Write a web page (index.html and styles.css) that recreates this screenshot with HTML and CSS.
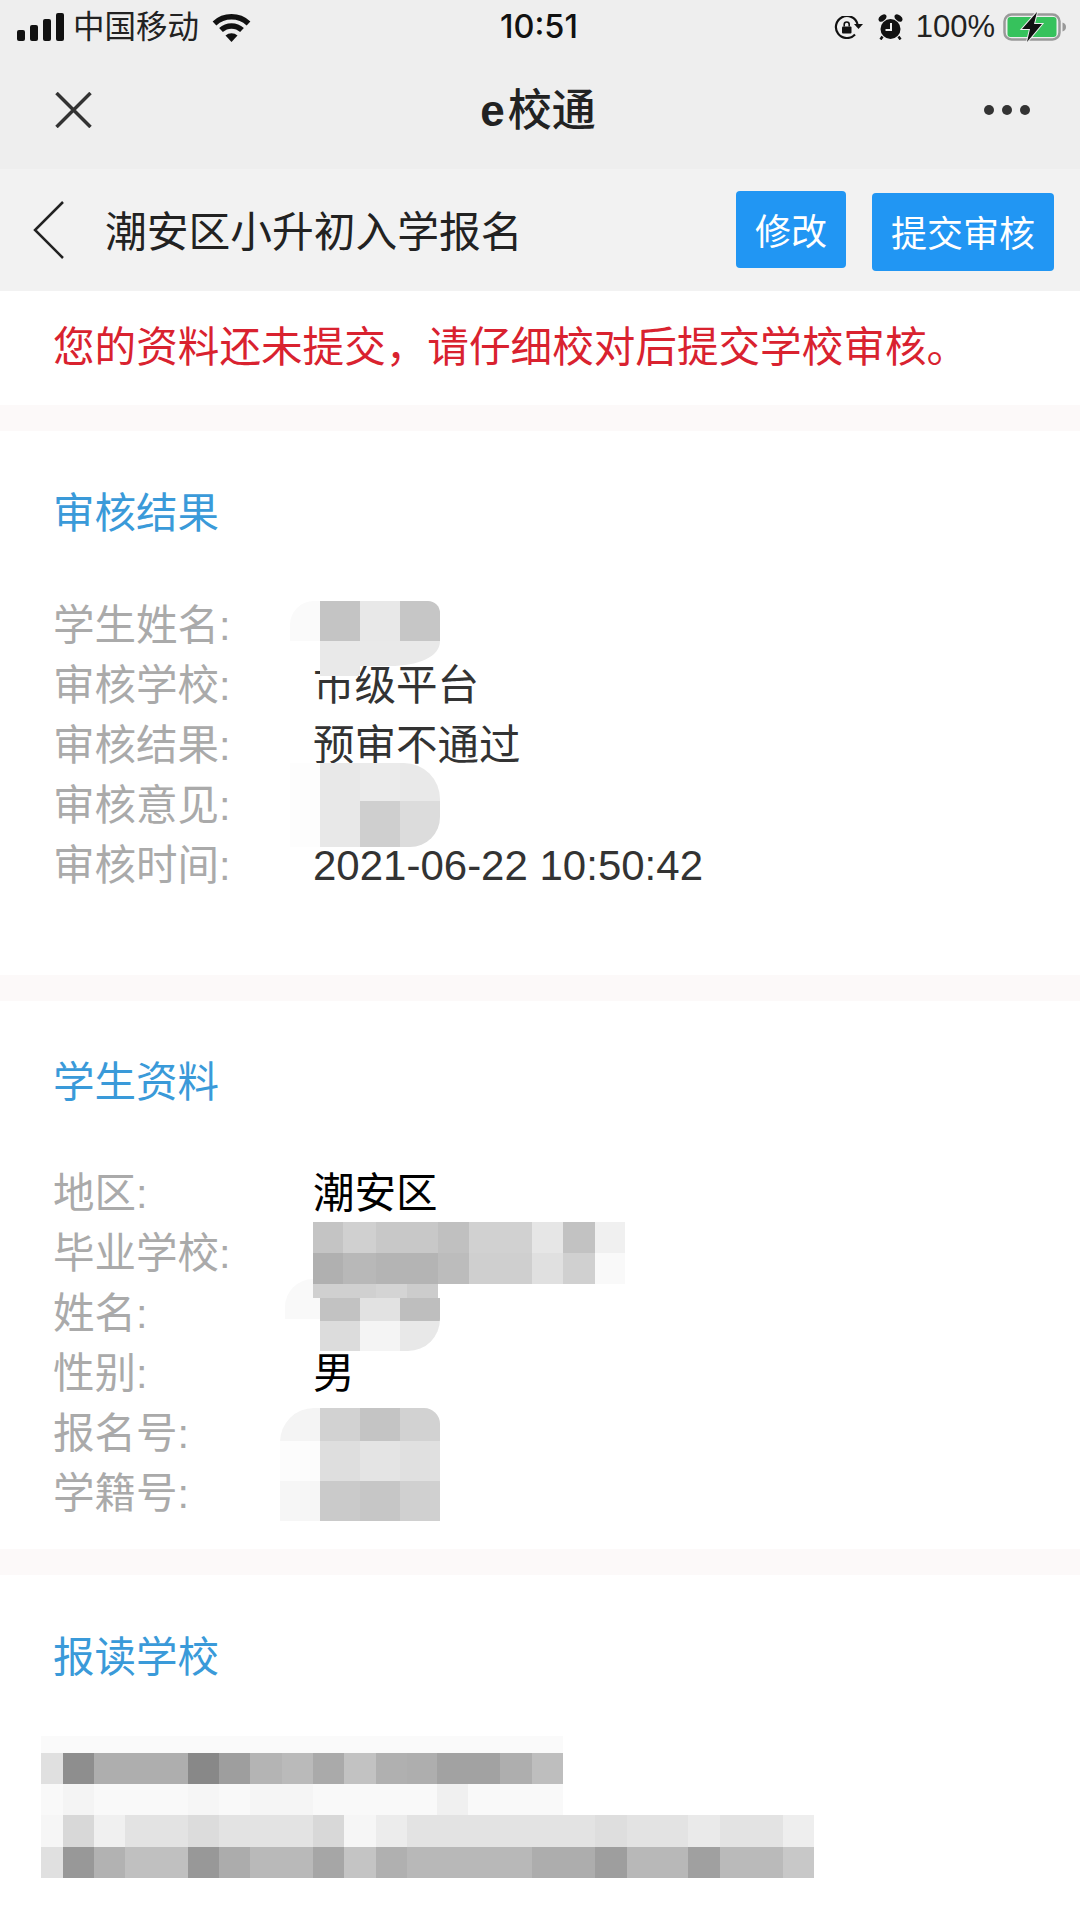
FILE: index.html
```html
<!DOCTYPE html>
<html lang="zh-CN">

<head>
    <meta charset="UTF-8">
    <meta name="viewport" content="width=device-width, initial-scale=1.0">
    <title>e校通</title>
    <link rel="stylesheet" href="styles.css">
</head>

<body>
    <div class="app-head">
        <div class="status">
            <div class="status-left">
                <div class="signal"><span class="bar1"></span><span class="bar2"></span><span class="bar3"></span><span class="bar4"></span></div>
                <span class="carrier">中国移动</span>
                <svg class="wifi" viewBox="0 0 39 29">
                    <path d="M2.500 10.500A25 25 0 0 1 36.500 10.500" fill="none" stroke="#111" stroke-width="5.500" />
                    <path d="M9 17A15.500 15.500 0 0 1 30 17" fill="none" stroke="#111" stroke-width="5.500" />
                    <path d="M13.500 22.500A9 9 0 0 1 25.500 22.500L19.500 29z" fill="#111" />
                </svg>
            </div>
            <span class="time">10:51</span>
            <div class="status-right">
                <svg class="lock" viewBox="0 0 29 23">
                    <path d="M23.500 8A11 11 0 1 0 21 18.500" fill="none" stroke="#111" stroke-width="2.200" />
                    <path d="M29 8H20L24.500 13z" fill="#111" />
                    <rect x="8" y="10.500" width="9.500" height="7" rx="1" fill="#111" />
                    <path d="M10.200 10.500V8.500a2.500 2.500 0 0 1 5 0V10.500" fill="none" stroke="#111" stroke-width="1.600" />
                </svg>
                <svg class="alarm" viewBox="0 0 25 26">
                    <circle cx="12.500" cy="15" r="10" fill="#111" />
                    <ellipse cx="4.500" cy="4" rx="4.500" ry="2.800" transform="rotate(-40 4.500 4)" fill="#111" />
                    <ellipse cx="20.500" cy="4" rx="4.500" ry="2.800" transform="rotate(40 20.500 4)" fill="#111" />
                    <path d="M4.500 22.500L2.500 25.500M20.500 22.500L22.500 25.500" stroke="#111" stroke-width="2.500" />
                    <path d="M13 9V16H7.500" fill="none" stroke="#eee" stroke-width="2" />
                </svg>
                <span class="battery-text">100%</span>
                <svg class="battery" viewBox="0 0 63 30">
                    <rect x="1.500" y="2.500" width="55" height="25" rx="7" fill="none" stroke="#999" stroke-width="2.500" />
                    <rect x="4.500" y="5" width="49" height="20" rx="3" fill="#36c25c" />
                    <path d="M59.500 10.500C62 11 63 13 63 15S62 19 59.500 19.500z" fill="#999" />
                    <path d="M34 0L19 17H27L24 30L39 12H31z" fill="#111" stroke="#eee" stroke-width="2" paint-order="stroke" />
                </svg>
            </div>
        </div>
        <div class="nav">
            <svg class="close" viewBox="0 0 37 36">
                <path d="M1.500 1L35.500 35M35.500 1L1.500 35" fill="none" stroke="#333" stroke-width="3.500" />
            </svg>
            <h1 class="nav-title"><span class="latin">e</span>校通</h1>
            <div class="more"><span></span><span></span><span></span></div>
        </div>
    </div>

    <div class="page-bar">
        <svg class="back" viewBox="0 0 32 58">
            <path d="M30 1L2 29L30 57" fill="none" stroke="#222" stroke-width="2.500" />
        </svg>
        <h2 class="page-title">潮安区小升初入学报名</h2>
        <button class="btn btn-edit">修改</button>
        <button class="btn btn-submit">提交审核</button>
    </div>

    <p class="notice">您的资料还未提交，请仔细校对后提交学校审核。</p>

    <div class="section first">
        <h3 class="section-title">审核结果</h3>
        <div class="rows">
            <div class="row">
                <span class="label">学生姓名:</span>
                <span class="value">
                    <svg class="mosaic m-name" viewBox="0 0 150 75">
                        <rect width="30" height="40" fill="#fafafa" />
                        <rect x="30" width="40" height="40" fill="#c4c4c4" />
                        <rect x="70" width="40" height="40" fill="#e8e8e8" />
                        <rect x="110" width="40" height="40" fill="#c6c6c6" />
                        <path d="M30 40H150C150 56 128 65 100 65H70V75H30z" fill="#e9e9e9" />
                    </svg>
                </span>
            </div>
            <div class="row"><span class="label">审核学校:</span><span class="value">市级平台</span></div>
            <div class="row"><span class="label">审核结果:</span><span class="value">预审不通过</span></div>
            <div class="row">
                <span class="label">审核意见:</span>
                <span class="value">
                    <svg class="mosaic m-opinion" viewBox="0 0 150 84" shape-rendering="crispEdges">
                        <rect y="0" width="30" height="84" fill="#fdfdfd" />
                        <rect x="30" width="40" height="38" fill="#e8e8e8" />
                        <rect x="70" width="40" height="38" fill="#ebebeb" />
                        <rect x="110" width="40" height="38" fill="#e9e9e9" />
                        <rect x="30" y="38" width="40" height="46" fill="#e8e8e8" />
                        <rect x="70" y="38" width="40" height="46" fill="#cfcfcf" />
                        <rect x="110" y="38" width="40" height="46" fill="#dcdcdc" />
                    </svg>
                </span>
            </div>
            <div class="row"><span class="label">审核时间:</span><span class="value date">2021-06-22 10:50:42</span></div>
        </div>
    </div>

    <div class="section second">
        <h3 class="section-title">学生资料</h3>
        <div class="rows">
            <div class="row"><span class="label">地区:</span><span class="value dark">潮安区</span></div>
            <div class="row">
                <span class="label">毕业学校:</span>
                <span class="value">
                    <svg class="mosaic m-school" viewBox="0 0 312 76" shape-rendering="crispEdges">
                        <rect x="0" width="30" height="31" fill="#c4c4c4" />
                        <rect x="30" width="33" height="31" fill="#d0d0d0" />
                        <rect x="63" width="63" height="31" fill="#c8c8c8" />
                        <rect x="125" width="31" height="31" fill="#c0c0c0" />
                        <rect x="156" width="63" height="31" fill="#d1d1d1" />
                        <rect x="219" width="31" height="31" fill="#e6e6e6" />
                        <rect x="250" width="32" height="31" fill="#c2c2c2" />
                        <rect x="282" width="30" height="31" fill="#f0f0f0" />
                        <rect x="0" y="31" width="30" height="31" fill="#b0b0b0" />
                        <rect x="30" y="31" width="33" height="31" fill="#b8b8b8" />
                        <rect x="63" y="31" width="62" height="31" fill="#b4b4b4" />
                        <rect x="125" y="31" width="31" height="31" fill="#bcbcbc" />
                        <rect x="156" y="31" width="63" height="31" fill="#cfcfcf" />
                        <rect x="219" y="31" width="31" height="31" fill="#e0e0e0" />
                        <rect x="250" y="31" width="32" height="31" fill="#d0d0d0" />
                        <rect x="282" y="31" width="30" height="31" fill="#f9f9f9" />
                        <rect x="0" y="62" width="63" height="14" fill="#d0d0d0" />
                        <rect x="63" y="62" width="31" height="14" fill="#d4d4d4" />
                        <rect x="94" y="62" width="31" height="14" fill="#cccccc" />
                    </svg>
                </span>
            </div>
            <div class="row">
                <span class="label">姓名:</span>
                <span class="value">
                    <svg class="mosaic m-student" viewBox="0 0 155 72" shape-rendering="crispEdges">
                        <path d="M0 0H28V19H35V40H0z" fill="#f9f9f9" />
                        <rect x="35" y="19" width="40" height="23" fill="#c2c2c2" />
                        <rect x="75" y="19" width="40" height="23" fill="#e2e2e2" />
                        <rect x="115" y="19" width="40" height="23" fill="#bebebe" />
                        <rect x="35" y="42" width="40" height="30" fill="#dcdcdc" />
                        <rect x="75" y="42" width="40" height="30" fill="#f4f4f4" />
                        <rect x="115" y="42" width="40" height="30" fill="#e8e8e8" />
                    </svg>
                </span>
            </div>
            <div class="row"><span class="label">性别:</span><span class="value dark">男</span></div>
            <div class="row">
                <span class="label">报名号:</span>
                <span class="value">
                    <svg class="mosaic m-number" viewBox="0 0 160 113" shape-rendering="crispEdges">
                        <rect width="40" height="33" fill="#f4f4f4" />
                        <rect x="40" width="40" height="33" fill="#d2d2d2" />
                        <rect x="80" width="40" height="33" fill="#c4c4c4" />
                        <rect x="120" width="40" height="33" fill="#d2d2d2" />
                        <rect y="33" width="40" height="40" fill="#fcfcfc" />
                        <rect x="40" y="33" width="40" height="40" fill="#dedede" />
                        <rect x="80" y="33" width="40" height="40" fill="#e4e4e4" />
                        <rect x="120" y="33" width="40" height="40" fill="#e0e0e0" />
                        <rect y="73" width="40" height="40" fill="#f6f6f6" />
                        <rect x="40" y="73" width="40" height="40" fill="#cacaca" />
                        <rect x="80" y="73" width="40" height="40" fill="#c6c6c6" />
                        <rect x="120" y="73" width="40" height="40" fill="#d0d0d0" />
                    </svg>
                </span>
            </div>
            <div class="row"><span class="label">学籍号:</span><span class="value"></span></div>
        </div>
    </div>

    <div class="section third">
        <h3 class="section-title">报读学校</h3>
        <svg class="mosaic-block" viewBox="0 0 773 142" shape-rendering="crispEdges">
            <!-- row 1 -->
            <rect x="0" width="522" height="17" fill="#fafafa" />
            <!-- row 2 -->
            <rect x="0" y="17" width="22" height="31" fill="#e0e0e0" />
            <rect x="22" y="17" width="31" height="31" fill="#8e8e8e" />
            <rect x="53" y="17" width="94" height="31" fill="#aeaeae" />
            <rect x="147" y="17" width="31" height="31" fill="#888888" />
            <rect x="178" y="17" width="31" height="31" fill="#9e9e9e" />
            <rect x="209" y="17" width="32" height="31" fill="#b4b4b4" />
            <rect x="241" y="17" width="31" height="31" fill="#bababa" />
            <rect x="272" y="17" width="31" height="31" fill="#aaaaaa" />
            <rect x="303" y="17" width="32" height="31" fill="#c2c2c2" />
            <rect x="335" y="17" width="31" height="31" fill="#b0b0b0" />
            <rect x="366" y="17" width="30" height="31" fill="#aeaeae" />
            <rect x="396" y="17" width="63" height="31" fill="#a2a2a2" />
            <rect x="459" y="17" width="32" height="31" fill="#aeaeae" />
            <rect x="491" y="17" width="31" height="31" fill="#bebebe" />
            <!-- row 3 -->
            <rect x="0" y="48" width="522" height="31" fill="#f9f9f9" />
            <rect x="22" y="48" width="31" height="31" fill="#f4f4f4" />
            <rect x="147" y="48" width="31" height="31" fill="#f6f6f6" />
            <rect x="209" y="48" width="63" height="31" fill="#f5f5f5" />
            <rect x="396" y="48" width="31" height="31" fill="#f0f0f0" />
            <!-- row 4 -->
            <rect x="0" y="79" width="773" height="32" fill="#e3e3e3" />
            <rect x="0" y="79" width="22" height="32" fill="#f6f6f6" />
            <rect x="22" y="79" width="31" height="32" fill="#d8d8d8" />
            <rect x="53" y="79" width="31" height="32" fill="#f0f0f0" />
            <rect x="147" y="79" width="31" height="32" fill="#dcdcdc" />
            <rect x="272" y="79" width="31" height="32" fill="#d8d8d8" />
            <rect x="303" y="79" width="32" height="32" fill="#f6f6f6" />
            <rect x="335" y="79" width="31" height="32" fill="#ececec" />
            <rect x="554" y="79" width="32" height="32" fill="#dedede" />
            <rect x="647" y="79" width="32" height="32" fill="#eaeaea" />
            <rect x="742" y="79" width="31" height="32" fill="#eeeeee" />
            <!-- row 5 -->
            <rect x="0" y="111" width="22" height="31" fill="#e0e0e0" />
            <rect x="22" y="111" width="31" height="31" fill="#989898" />
            <rect x="53" y="111" width="31" height="31" fill="#b2b2b2" />
            <rect x="84" y="111" width="63" height="31" fill="#c0c0c0" />
            <rect x="147" y="111" width="31" height="31" fill="#989898" />
            <rect x="178" y="111" width="31" height="31" fill="#acacac" />
            <rect x="209" y="111" width="63" height="31" fill="#b9b9b9" />
            <rect x="272" y="111" width="31" height="31" fill="#a6a6a6" />
            <rect x="303" y="111" width="32" height="31" fill="#c4c4c4" />
            <rect x="335" y="111" width="31" height="31" fill="#b0b0b0" />
            <rect x="366" y="111" width="125" height="31" fill="#b8b8b8" />
            <rect x="491" y="111" width="63" height="31" fill="#adadad" />
            <rect x="554" y="111" width="32" height="31" fill="#9e9e9e" />
            <rect x="586" y="111" width="61" height="31" fill="#b8b8b8" />
            <rect x="647" y="111" width="32" height="31" fill="#a0a0a0" />
            <rect x="679" y="111" width="63" height="31" fill="#bababa" />
            <rect x="742" y="111" width="31" height="31" fill="#c8c8c8" />
        </svg>
    </div>
</body>

</html>
```

FILE: styles.css
```css
* {
    box-sizing: border-box;
}

html,
body {
    margin: 0;
    background: #fff;
}

body {
    width: 1080px;
    height: 1920px;
    overflow: hidden;
    font-family: "Liberation Sans", "Noto Sans CJK SC", sans-serif;
    font-size: 41.5px;
    color: #333;
}

h1,
h2,
h3,
p {
    margin: 0;
    font-weight: normal;
}

.app-head {
    background: #eeeeee;
}

.status {
    position: relative;
    display: flex;
    align-items: center;
    justify-content: space-between;
    height: 54px;
    padding: 0 14px 0 17px;
}

.status-left,
.status-right {
    display: flex;
    align-items: center;
}

.signal {
    display: flex;
    align-items: flex-end;
    gap: 5px;
    height: 28px;
}

.signal span {
    width: 8px;
    background: #111;
    border-radius: 2px;
}

.bar1 {
    height: 11px;
}

.bar2 {
    height: 16px;
}

.bar3 {
    height: 22px;
}

.bar4 {
    height: 28px;
}

.carrier {
    margin-left: 9px;
    font-size: 31.5px;
    line-height: 40px;
    color: #222;
}

.wifi {
    width: 39px;
    height: 29px;
    margin-left: 13px;
}

.time {
    position: absolute;
    left: 500px;
    top: 7px;
    font-family: "Inter", sans-serif;
    font-weight: 500;
    font-size: 32.5px;
    line-height: 40px;
    color: #111;
}

.lock {
    width: 29px;
    height: 23px;
}

.alarm {
    width: 25px;
    height: 26px;
    margin-left: 15px;
}

.battery-text {
    margin-left: 13px;
    font-size: 31px;
    line-height: 40px;
    color: #222;
}

.battery {
    width: 63px;
    height: 30px;
    margin-left: 8px;
}

.nav {
    position: relative;
    display: flex;
    align-items: center;
    justify-content: space-between;
    height: 115px;
    padding: 0 50px 4px 55px;
}

.close {
    width: 37px;
    height: 36px;
}

.nav-title {
    margin-top: 2px;
    font-size: 44px;
    font-weight: 500;
    line-height: 58px;
    color: #222;
}

.nav-title .latin {
    font-weight: 700;
    margin-right: 3px;
}

.more {
    display: flex;
    gap: 8px;
}

.more span {
    width: 10px;
    height: 10px;
    border-radius: 50%;
    background: #333;
}

.page-bar {
    display: flex;
    align-items: flex-start;
    height: 122px;
    padding: 22px 26px 0 33px;
    background: #f2f2f2;
}

.back {
    width: 32px;
    height: 58px;
    margin-top: 10px;
}

.page-title {
    margin-left: 40px;
    flex: 1;
    font-size: 41.75px;
    line-height: 83px;
    height: 78px;
    color: #222;
}

.btn {
    border: 0;
    border-radius: 4px;
    padding: 0 0 2px;
    background: #2196f3;
    color: #fff;
    font-family: inherit;
    font-size: 36px;
}

.btn-edit {
    width: 110px;
    height: 77px;
}

.btn-submit {
    width: 182px;
    height: 78px;
    margin: 2px 0 0 26px;
}

.notice {
    height: 114px;
    padding-left: 53px;
    font-size: 41.6px;
    line-height: 114px;
    color: #d9222f;
    white-space: nowrap;
}

.section {
    border-top: 26px solid #fcf9f9;
    padding: 50px 0 0 53px;
}

.section.first {
    height: 570px;
}

.section.second {
    height: 574px;
}

.section-title {
    height: 60px;
    font-size: 41.5px;
    line-height: 65px;
    color: #3a9ad9;
}

.second .section-title {
    line-height: 63px;
}

.rows {
    margin-top: 54px;
}

.second .rows {
    margin-top: 51px;
}

.row {
    display: flex;
    height: 60px;
    line-height: 61px;
}

.second .row {
    line-height: 64px;
}

.label {
    width: 260px;
    color: #aaaaaa;
}

.value {
    position: relative;
    white-space: nowrap;
}

.value.dark {
    color: #000;
}

.value.date {
    font-size: 42px;
}

.mosaic {
    position: absolute;
    z-index: 1;
    display: block;
}

.m-name {
    left: -23px;
    top: 6px;
    width: 150px;
    height: 75px;
    border-radius: 24px 12px 0 0;
}

.m-opinion {
    left: -23px;
    top: -12px;
    width: 150px;
    height: 84px;
    border-radius: 0 36px 30px 0;
}

.m-school {
    left: 0;
    top: 0;
    width: 312px;
    height: 76px;
}

.m-student {
    left: -28px;
    top: -3px;
    width: 155px;
    height: 72px;
    border-radius: 28px 12px 32px 0;
}

.m-number {
    left: -33px;
    top: 6px;
    width: 160px;
    height: 113px;
    border-radius: 34px 16px 0 0;
}

.mosaic-block {
    display: block;
    width: 773px;
    height: 142px;
    margin: 51px 0 0 -12px;
}
```
